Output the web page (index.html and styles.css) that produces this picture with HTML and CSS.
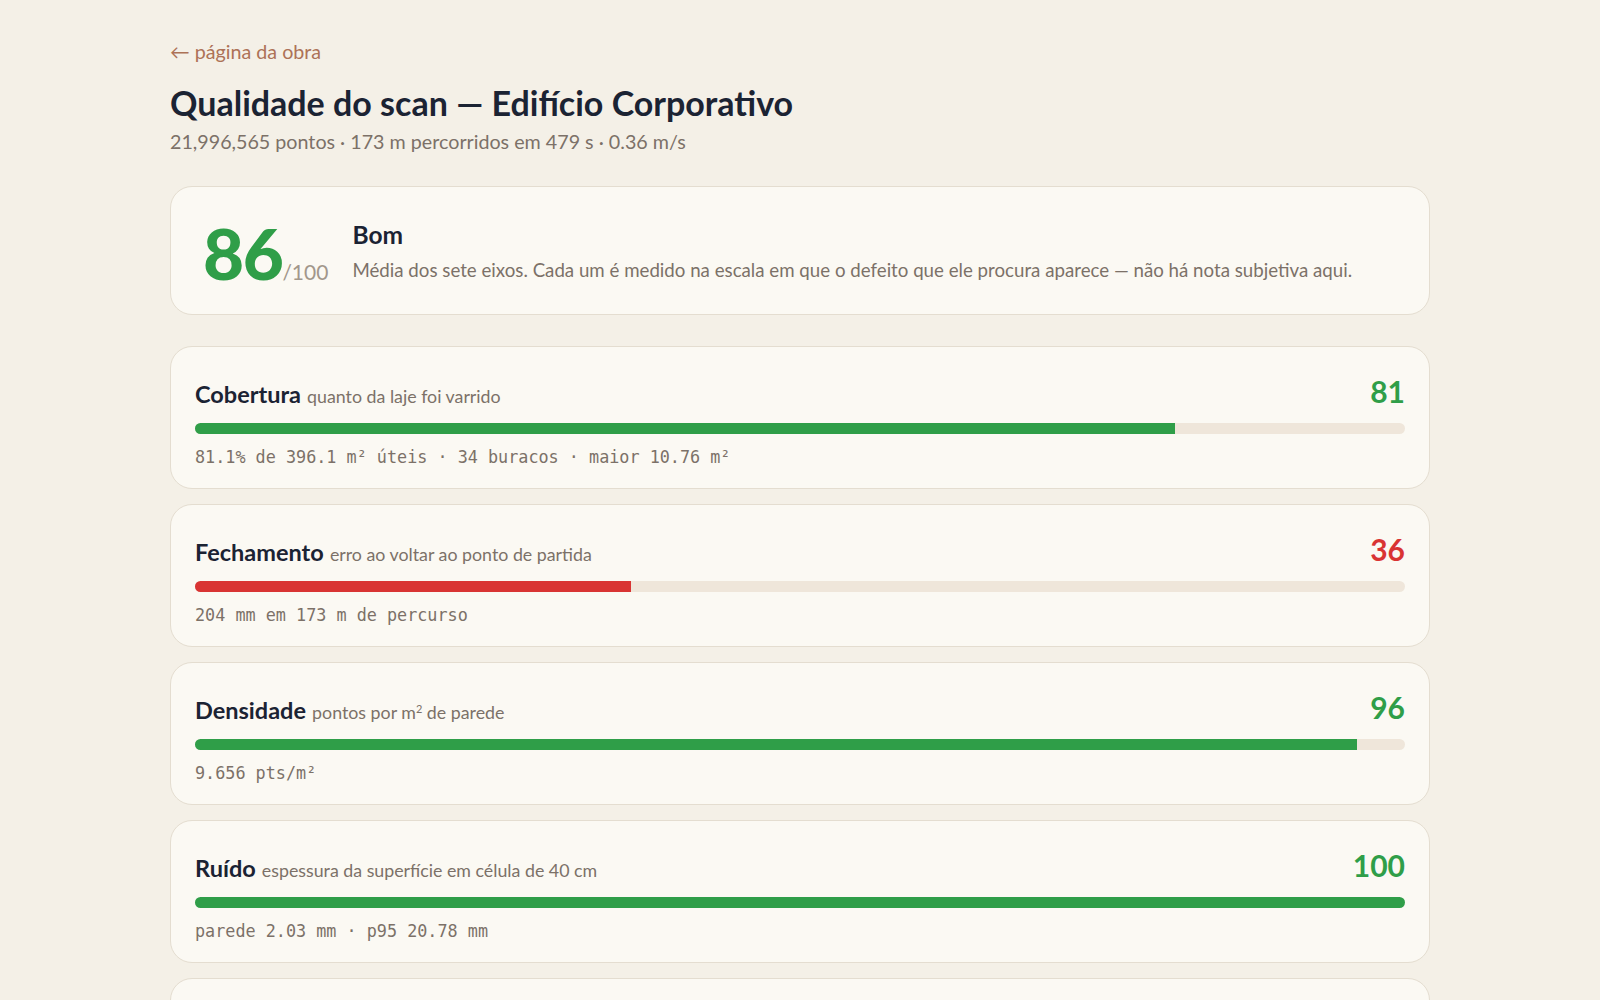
FILE: index.html
```html
<!DOCTYPE html>
<html lang="pt">
<head>
<meta charset="utf-8">
<title>Qualidade do scan — Edifício Corporativo</title>
<link rel="stylesheet" href="styles.css">
</head>
<body>
<main class="page">
  <a class="back" href="#">← página da obra</a>
  <h1 class="title">Qualidade do scan — Edifício Corporativo</h1>
  <p class="meta">21,996,565 pontos · 173 m percorridos em 479 s · 0.36 m/s</p>

  <section class="card overall">
    <div class="overall-score"><span class="big good">86</span><span class="of">/100</span></div>
    <div class="overall-text">
      <div class="verdict">Bom</div>
      <p class="explain">Média dos sete eixos. Cada um é medido na escala em que o defeito que ele procura aparece — não há nota subjetiva aqui.</p>
    </div>
  </section>

  <section class="card metric">
    <div class="metric-head">
      <div class="metric-name"><strong>Cobertura</strong> <span class="hint">quanto da laje foi varrido</span></div>
      <div class="metric-score good">81</div>
    </div>
    <div class="track"><div class="fill good-bg" style="width:81%"></div></div>
    <div class="detail">81.1% de 396.1 m² úteis · 34 buracos · maior 10.76 m²</div>
  </section>

  <section class="card metric">
    <div class="metric-head">
      <div class="metric-name"><strong>Fechamento</strong> <span class="hint">erro ao voltar ao ponto de partida</span></div>
      <div class="metric-score bad">36</div>
    </div>
    <div class="track"><div class="fill bad-bg" style="width:36%"></div></div>
    <div class="detail">204 mm em 173 m de percurso</div>
  </section>

  <section class="card metric">
    <div class="metric-head">
      <div class="metric-name"><strong>Densidade</strong> <span class="hint">pontos por m<sup>2</sup> de parede</span></div>
      <div class="metric-score good">96</div>
    </div>
    <div class="track"><div class="fill good-bg" style="width:96%"></div></div>
    <div class="detail">9.656 pts/m²</div>
  </section>

  <section class="card metric">
    <div class="metric-head">
      <div class="metric-name"><strong>Ruído</strong> <span class="hint">espessura da superfície em célula de 40 cm</span></div>
      <div class="metric-score good">100</div>
    </div>
    <div class="track"><div class="fill good-bg" style="width:100%"></div></div>
    <div class="detail">parede 2.03 mm · p95 20.78 mm</div>
  </section>

  <section class="card metric">
    <div class="metric-head">
      <div class="metric-name"><strong>Deriva</strong> <span class="hint">desvio acumulado da trajetória</span></div>
      <div class="metric-score good">90</div>
    </div>
    <div class="track"><div class="fill good-bg" style="width:90%"></div></div>
    <div class="detail">—</div>
  </section>
</main>
</body>
</html>
```

FILE: styles.css
```css
* { box-sizing: border-box; }

html, body {
  margin: 0;
  padding: 0;
  background: #f4f0e7;
}

body {
  font-family: Lato, "Noto Sans", "DejaVu Sans", sans-serif;
  color: #1b2333;
}

.page {
  width: 1260px;
  margin: 0 auto;
  padding-top: 38px;
}

.back {
  display: inline-block;
  color: #ad7257;
  text-decoration: none;
  font-size: 19.7px;
  line-height: 28px;
}

.title {
  margin: 17px 0 0;
  font-size: 34px;
  line-height: 40px;
  font-weight: 700;
  color: #1b2333;
}

.meta {
  margin: 6px 0 0;
  font-size: 19.7px;
  line-height: 26px;
  color: #7c7168;
}

.card {
  background: #fbf9f3;
  border: 1.5px solid #e4ddd0;
  border-radius: 22px;
}

.overall {
  margin-top: 31px;
  height: 129px;
  display: flex;
  align-items: center;
  gap: 24px;
  padding: 0 32px;
}

.overall-score {
  display: flex;
  align-items: baseline;
  padding-top: 4px;
}

.big {
  font-size: 71px;
  line-height: 1;
  font-weight: 900;
  letter-spacing: -1.5px;
}

.of {
  font-size: 21px;
  color: #a2978b;
  font-weight: 400;
}

.good { color: #2f9e48; }
.bad { color: #d93433; }
.good-bg { background: #2f9e48; }
.bad-bg { background: #d93433; }

.verdict {
  font-size: 24.5px;
  font-weight: 700;
  line-height: 30px;
  color: #1b2333;
}

.explain {
  margin: 8px 0 0;
  font-size: 18.7px;
  line-height: 24px;
  color: #7c7168;
}

.metric {
  margin-top: 31px;
  padding: 26px 24px 19px;
}

.metric + .metric {
  margin-top: 15px;
}

.metric-head {
  display: flex;
  justify-content: space-between;
  align-items: baseline;
  height: 36px;
}

.metric-name strong {
  font-size: 23.5px;
  font-weight: 700;
  color: #1b2333;
}

.hint {
  font-size: 17.8px;
  color: #7c7168;
  margin-left: 2px;
}

.hint sup {
  font-size: 11px;
  vertical-align: 6px;
  line-height: 0;
}

.metric-score {
  font-size: 30px;
  font-weight: 700;
  line-height: 36px;
}

.track {
  margin-top: 14px;
  height: 11px;
  border-radius: 6px;
  background: #efe6da;
  overflow: hidden;
}

.fill {
  height: 100%;
}

.detail {
  margin-top: 11px;
  font-family: "DejaVu Sans Mono", "Liberation Mono", monospace;
  font-size: 16.8px;
  line-height: 24px;
  color: #7c7168;
}
```
